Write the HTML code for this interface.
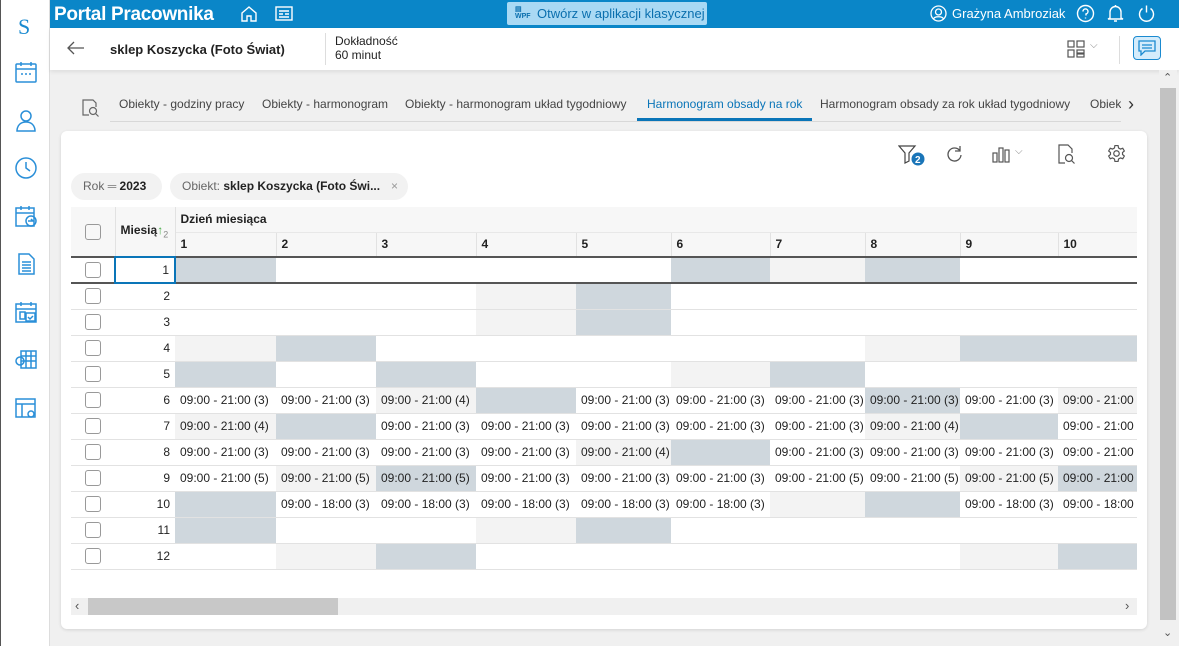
<!DOCTYPE html>
<html><head><meta charset="utf-8">
<style>
*{box-sizing:border-box;margin:0;padding:0}
body{width:1179px;height:646px;overflow:hidden;background:#f0f0f0;font-family:"Liberation Sans",sans-serif;position:relative;color:#222}
.side{position:absolute;left:0;top:0;width:50px;height:646px;background:#fff;border-right:1px solid #ddd;border-left:1px solid #555}
.side svg{position:absolute;left:13px}
.top{position:absolute;left:50px;top:0;width:1129px;height:28px;background:#0a86c8}
.top .title{position:absolute;left:4px;top:4px;color:#fff;font-size:19px;font-weight:bold;letter-spacing:-0.3px}
.wpf{position:absolute;left:457px;top:2px;width:200px;height:23px;background:#a9d9f4;border-radius:2px;color:#0a6fae;font-size:13px;padding:4px 0 0 30px}
.sub{position:absolute;left:50px;top:28px;width:1129px;height:42px;background:#fff;box-shadow:0 2px 4px rgba(0,0,0,.08)}
.tabs{position:absolute;left:110px;top:90px;width:1030px;height:32px;border-bottom:1px solid #d8d8d8;font-size:12px;color:#444;white-space:nowrap;overflow:hidden}
.tabs span{position:absolute;top:7px}
.card{position:absolute;left:61px;top:131px;width:1086px;height:498px;background:#fff;border-radius:6px;box-shadow:0 1px 3px rgba(0,0,0,.12)}
.chip{position:absolute;top:173px;height:27px;background:#f2f2f2;border-radius:14px;font-size:12px;padding:6px 12px;color:#666}
.chip b{color:#222}
.wrap{position:absolute;left:71px;top:207px;width:1066px;height:370px;overflow:hidden}
table{border-collapse:collapse;table-layout:fixed;font-size:12px;width:1116px}
td{height:26px;border-bottom:1px solid #e2e2e2;padding:0 5px;white-space:nowrap;overflow:hidden}
.h td{background:#f7f7f7;font-weight:bold;height:25px}
.d{background:#cfd7dd}.l{background:#f3f3f3}
.cb{display:inline-block;width:16px;height:16px;border:1px solid #999;border-radius:3px;vertical-align:middle;margin-left:14px}
.n{text-align:right;padding-right:5px}
</style></head><body>
<div class="side">
<div style="position:absolute;left:17px;top:14px;color:#1a8ad0;font-family:'Liberation Serif',serif;font-size:22px">S</div>
<svg style="top:60px" width="24" height="24" viewBox="0 0 24 24" fill="none" stroke="#2a8fd8" stroke-width="1.5"><rect x="2" y="4" width="20" height="18" rx="1"/><path d="M2 9h20M7 2v4M17 2v4M7 14h2M11 14h2M15 14h2"/></svg>
<svg style="top:108px" width="24" height="24" viewBox="0 0 24 24" fill="none" stroke="#2a8fd8" stroke-width="1.5"><circle cx="12" cy="8" r="5"/><path d="M3 23c0-6 4-9 9-9s9 3 9 9z"/></svg>
<svg style="top:156px" width="24" height="24" viewBox="0 0 24 24" fill="none" stroke="#2a8fd8" stroke-width="1.5"><circle cx="12" cy="12" r="10"/><path d="M12 6v6l4 3"/></svg>
<svg style="top:204px" width="24" height="24" viewBox="0 0 24 24" fill="none" stroke="#2a8fd8" stroke-width="1.5"><rect x="2" y="4" width="18" height="18"/><path d="M2 9h18M7 2v4M15 2v4"/><circle cx="17" cy="17" r="5"/><path d="M14 17h5l-2-2"/></svg>
<svg style="top:252px" width="24" height="24" viewBox="0 0 24 24" fill="none" stroke="#2a8fd8" stroke-width="1.5"><path d="M5 2h10l5 5v15H5z"/><path d="M8 10h9M8 13h9M8 16h9M8 19h9"/></svg>
<svg style="top:300px" width="24" height="24" viewBox="0 0 24 24" fill="none" stroke="#2a8fd8" stroke-width="1.5"><rect x="2" y="4" width="20" height="18"/><path d="M2 9h20M7 2v4M17 2v4M6 12h5v7H6z"/><rect x="12" y="13" width="9" height="8"/><path d="M14 17l2 2 3-3"/></svg>
<svg style="top:348px" width="24" height="24" viewBox="0 0 24 24" fill="none" stroke="#2a8fd8" stroke-width="1.5"><rect x="7" y="3" width="15" height="17"/><path d="M7 8h15M7 13h15M12 3v17M17 3v17"/><circle cx="6" cy="13" r="4"/></svg>
<svg style="top:396px" width="24" height="24" viewBox="0 0 24 24" fill="none" stroke="#2a8fd8" stroke-width="1.5"><rect x="2" y="3" width="19" height="18"/><path d="M2 8h19M8 8v13"/><circle cx="17" cy="18" r="3"/></svg>
</div>
<div class="top">
<div class="title">Portal Pracownika</div>
<svg style="position:absolute;left:190px;top:5px" width="18" height="18" viewBox="0 0 18 18" fill="none" stroke="#fff" stroke-width="1.4"><path d="M2 8L9 2l7 6v8h-5v-5H7v5H2z"/></svg>
<svg style="position:absolute;left:225px;top:6px" width="18" height="15" viewBox="0 0 18 15" fill="none" stroke="#fff" stroke-width="1.4"><rect x="1" y="1" width="16" height="13"/><path d="M4 5h10M4 8h4M10 8h4M4 11h10"/></svg>
<div class="wpf"><span style="position:absolute;left:8px;top:3px;font-size:7px;font-weight:bold">▤<br>WPF</span>Otwórz w aplikacji klasycznej</div>
<svg style="position:absolute;left:880px;top:5px" width="17" height="17" viewBox="0 0 17 17" fill="none" stroke="#fff" stroke-width="1.3"><circle cx="8.5" cy="8.5" r="7.5"/><circle cx="8.5" cy="7" r="3"/><path d="M3.5 14c1-3 9-3 10 0"/></svg>
<div style="position:absolute;left:902px;top:6px;color:#fff;font-size:13px">Grażyna Ambroziak</div>
<svg style="position:absolute;left:1026px;top:4px" width="19" height="19" viewBox="0 0 19 19" fill="none" stroke="#fff" stroke-width="1.4"><circle cx="9.5" cy="9.5" r="8"/><path d="M7 7.5a2.5 2.5 0 1 1 3 2.4v1.6M9.5 13.5v1"/></svg>
<svg style="position:absolute;left:1056px;top:4px" width="19" height="19" viewBox="0 0 19 19" fill="none" stroke="#fff" stroke-width="1.4"><path d="M4 14V8a5.5 5.5 0 0 1 11 0v6l2 1H2zM8 17h3M9.5 1v1.5"/></svg>
<svg style="position:absolute;left:1087px;top:4px" width="19" height="19" viewBox="0 0 19 19" fill="none" stroke="#fff" stroke-width="1.4"><path d="M5.5 4.5a7 7 0 1 0 8 0M9.5 1.5v7"/></svg>
</div>
<div class="sub">
<svg style="position:absolute;left:17px;top:13px" width="18" height="14" viewBox="0 0 18 14" fill="none" stroke="#555" stroke-width="1.3"><path d="M17 7H2M7 1L1 7l6 6"/></svg>
<div style="position:absolute;left:60px;top:14px;font-size:13px;font-weight:bold">sklep Koszycka (Foto Świat)</div>
<div style="position:absolute;left:275px;top:5px;height:32px;border-left:1px solid #ddd"></div>
<div style="position:absolute;left:285px;top:6px;font-size:12px;line-height:14px;color:#222">Dokładność<br>60 minut</div>
<svg style="position:absolute;left:1017px;top:12px" width="18" height="18" viewBox="0 0 18 18" fill="none" stroke="#555" stroke-width="1.2"><rect x="1" y="1" width="6" height="6"/><rect x="10" y="1" width="7" height="6"/><rect x="1" y="10" width="6" height="7"/><rect x="10" y="10" width="7" height="3"/><rect x="10" y="14" width="7" height="3"/></svg>
<div style="position:absolute;left:1040px;top:12px;color:#888;font-size:10px">⌵</div>
<div style="position:absolute;left:1069px;top:8px;height:28px;border-left:1px solid #ddd"></div>
<div style="position:absolute;left:1083px;top:8px;width:28px;height:24px;border:1.5px solid #1a8ad0;border-radius:4px;background:#d4ecfb"><svg style="position:absolute;left:4px;top:3px" width="18" height="16" viewBox="0 0 18 16" fill="none" stroke="#1a8ad0" stroke-width="1.3"><path d="M1 1h16v10H7l-4 4v-4H1z"/><path d="M4 5h10M4 8h10"/></svg></div>
</div>
<div style="position:absolute;left:1159px;top:70px;width:18px;height:576px;background:#f0f0f0"></div>
<div style="position:absolute;left:1160px;top:88px;width:16px;height:532px;background:#c2c2c2"></div>
<div style="position:absolute;left:1163px;top:71px;font-size:11px;color:#555">⌃</div>
<div style="position:absolute;left:1163px;top:626px;font-size:11px;color:#555">⌄</div>
<svg style="position:absolute;left:81px;top:98px" width="20" height="20" viewBox="0 0 20 20" fill="none" stroke="#666" stroke-width="1.2"><path d="M8 17H2V2h10l3 3v4"/><circle cx="12" cy="13" r="3.5"/><path d="M14.5 15.5l3 3"/></svg>
<div class="tabs">
<span style="left:9px">Obiekty - godziny pracy</span>
<span style="left:152px">Obiekty - harmonogram</span>
<span style="left:295px">Obiekty - harmonogram układ tygodniowy</span>
<span style="left:537px;color:#0a75b8">Harmonogram obsady na rok</span>
<div style="position:absolute;left:527px;top:28px;width:175px;height:3px;background:#0a75b8"></div>
<span style="left:710px">Harmonogram obsady za rok układ tygodniowy</span>
<span style="left:980px">Obiekty</span>
</div>
<div style="position:absolute;left:1121px;top:90px;width:32px;height:32px;background:#f0f0f0;font-size:18px;color:#333;padding:4px 0 0 7px">›</div>
<div class="card">
<svg style="position:absolute;left:837px;top:13px" width="28" height="22" viewBox="0 0 28 22" fill="none" stroke="#444" stroke-width="1.2"><path d="M1 2h16l-6 7v8l-4 2V9z"/><circle cx="20" cy="15" r="6.5" fill="#1a75b8" stroke="none"/><text x="17" y="19" fill="#fff" stroke="none" font-size="10" font-weight="bold" font-family="Liberation Sans">2</text></svg>
<svg style="position:absolute;left:885px;top:14px" width="17" height="17" viewBox="0 0 17 17" fill="none" stroke="#555" stroke-width="1.3"><path d="M14 6a6.5 6.5 0 1 0 1 4M14 1v5H9"/></svg>
<svg style="position:absolute;left:931px;top:14px" width="18" height="18" viewBox="0 0 18 18" fill="none" stroke="#555" stroke-width="1.2"><rect x="1" y="8" width="4" height="9"/><rect x="7" y="3" width="4" height="14"/><rect x="13" y="5" width="4" height="12"/></svg>
<div style="position:absolute;left:954px;top:15px;color:#888;font-size:10px">⌵</div>
<svg style="position:absolute;left:996px;top:13px" width="20" height="20" viewBox="0 0 20 20" fill="none" stroke="#555" stroke-width="1.2"><path d="M8 19H2V1h9l4 4v4"/><circle cx="12" cy="14" r="3.5"/><path d="M14.5 16.5l3 3"/></svg>
<svg style="position:absolute;left:1046px;top:13px" width="19" height="19" viewBox="0 0 24 24" fill="none" stroke="#555" stroke-width="1.5"><circle cx="12" cy="12" r="3.5"/><path d="M10 2h4l.6 3 2.4 1.4 2.9-1 2 3.4-2.3 2v2.4l2.3 2-2 3.4-2.9-1L14.6 19l-.6 3h-4l-.6-3L7 17.6l-2.9 1-2-3.4 2.3-2v-2.4l-2.3-2 2-3.4 2.9 1L9.4 5z"/></svg>
</div>
<div class="chip" style="left:71px;width:91px">Rok <span style="color:#888">═</span> <b>2023</b></div>
<div class="chip" style="left:170px;width:238px">Obiekt: <b>sklep Koszycka (Foto Świ...</b><span style="position:absolute;right:10px;color:#999">×</span></div>
<div class="wrap">
<table>
<colgroup><col style="width:44px"><col style="width:60px"><col style="width:101px"><col style="width:100px"><col style="width:100px"><col style="width:100px"><col style="width:95px"><col style="width:99px"><col style="width:95px"><col style="width:95px"><col style="width:98px"><col style="width:129px"></colgroup>
<tr class="h"><td rowspan="2" style="border-right:1px solid #e2e2e2;padding:0"><span class="cb"></span></td><td rowspan="2" style="border-right:1px solid #e2e2e2;padding-left:5px">Miesią<span style="color:#4a4;font-weight:normal">↑</span><sub style="font-weight:normal;color:#888;font-size:9px">2</sub></td><td colspan="10" style="border-bottom:1px solid #e8e8e8">Dzień miesiąca</td></tr>
<tr class="h" style="border-bottom:2px solid #555"><td>1</td><td style="border-left:1px solid #e2e2e2">2</td><td style="border-left:1px solid #e2e2e2">3</td><td style="border-left:1px solid #e2e2e2">4</td><td style="border-left:1px solid #e2e2e2">5</td><td style="border-left:1px solid #e2e2e2">6</td><td style="border-left:1px solid #e2e2e2">7</td><td style="border-left:1px solid #e2e2e2">8</td><td style="border-left:1px solid #e2e2e2">9</td><td style="border-left:1px solid #e2e2e2">10</td></tr>
<tr style="border-bottom:2px solid #555"><td style="padding:0"><span class="cb"></span></td><td class="n" style="border:2px solid #0a75b8">1</td><td class="d"></td><td></td><td></td><td></td><td></td><td class="d"></td><td class="l"></td><td class="d"></td><td></td><td></td></tr>
<tr><td style="padding:0"><span class="cb"></span></td><td class="n">2</td><td></td><td></td><td></td><td class="l"></td><td class="d"></td><td></td><td></td><td></td><td></td><td></td></tr>
<tr><td style="padding:0"><span class="cb"></span></td><td class="n">3</td><td></td><td></td><td></td><td class="l"></td><td class="d"></td><td></td><td></td><td></td><td></td><td></td></tr>
<tr><td style="padding:0"><span class="cb"></span></td><td class="n">4</td><td class="l"></td><td class="d"></td><td></td><td></td><td></td><td></td><td></td><td class="l"></td><td class="d"></td><td class="d"></td></tr>
<tr><td style="padding:0"><span class="cb"></span></td><td class="n">5</td><td class="d"></td><td></td><td class="d"></td><td></td><td></td><td class="l"></td><td class="d"></td><td></td><td></td><td></td></tr>
<tr><td style="padding:0"><span class="cb"></span></td><td class="n">6</td><td>09:00 - 21:00 (3)</td><td>09:00 - 21:00 (3)</td><td class="l">09:00 - 21:00 (4)</td><td class="d"></td><td>09:00 - 21:00 (3)</td><td>09:00 - 21:00 (3)</td><td>09:00 - 21:00 (3)</td><td class="d">09:00 - 21:00 (3)</td><td>09:00 - 21:00 (3)</td><td class="l">09:00 - 21:00 (3)</td></tr>
<tr><td style="padding:0"><span class="cb"></span></td><td class="n">7</td><td class="l">09:00 - 21:00 (4)</td><td class="d"></td><td>09:00 - 21:00 (3)</td><td>09:00 - 21:00 (3)</td><td>09:00 - 21:00 (3)</td><td>09:00 - 21:00 (3)</td><td>09:00 - 21:00 (3)</td><td class="l">09:00 - 21:00 (4)</td><td class="d"></td><td>09:00 - 21:00 (3)</td></tr>
<tr><td style="padding:0"><span class="cb"></span></td><td class="n">8</td><td>09:00 - 21:00 (3)</td><td>09:00 - 21:00 (3)</td><td>09:00 - 21:00 (3)</td><td>09:00 - 21:00 (3)</td><td class="l">09:00 - 21:00 (4)</td><td class="d"></td><td>09:00 - 21:00 (3)</td><td>09:00 - 21:00 (3)</td><td>09:00 - 21:00 (3)</td><td>09:00 - 21:00 (3)</td></tr>
<tr><td style="padding:0"><span class="cb"></span></td><td class="n">9</td><td>09:00 - 21:00 (5)</td><td class="l">09:00 - 21:00 (5)</td><td class="d">09:00 - 21:00 (5)</td><td>09:00 - 21:00 (3)</td><td>09:00 - 21:00 (3)</td><td>09:00 - 21:00 (3)</td><td>09:00 - 21:00 (5)</td><td>09:00 - 21:00 (5)</td><td class="l">09:00 - 21:00 (5)</td><td class="d">09:00 - 21:00 (5)</td></tr>
<tr><td style="padding:0"><span class="cb"></span></td><td class="n">10</td><td class="d"></td><td>09:00 - 18:00 (3)</td><td>09:00 - 18:00 (3)</td><td>09:00 - 18:00 (3)</td><td>09:00 - 18:00 (3)</td><td>09:00 - 18:00 (3)</td><td class="l"></td><td class="d"></td><td>09:00 - 18:00 (3)</td><td>09:00 - 18:00 (3)</td></tr>
<tr><td style="padding:0"><span class="cb"></span></td><td class="n">11</td><td class="d"></td><td></td><td></td><td class="l"></td><td class="d"></td><td></td><td></td><td></td><td></td><td></td></tr>
<tr><td style="padding:0"><span class="cb"></span></td><td class="n">12</td><td></td><td class="l"></td><td class="d"></td><td></td><td></td><td></td><td></td><td></td><td class="l"></td><td class="d"></td></tr>
</table>
</div>
<div style="position:absolute;left:71px;top:598px;width:1066px;height:17px;background:#f0f0f0"></div>
<div style="position:absolute;left:88px;top:598px;width:250px;height:17px;background:#c8c8c8"></div>
<div style="position:absolute;left:75px;top:598px;font-size:13px;color:#555">‹</div>
<div style="position:absolute;left:1125px;top:598px;font-size:13px;color:#555">›</div>
</body></html>
